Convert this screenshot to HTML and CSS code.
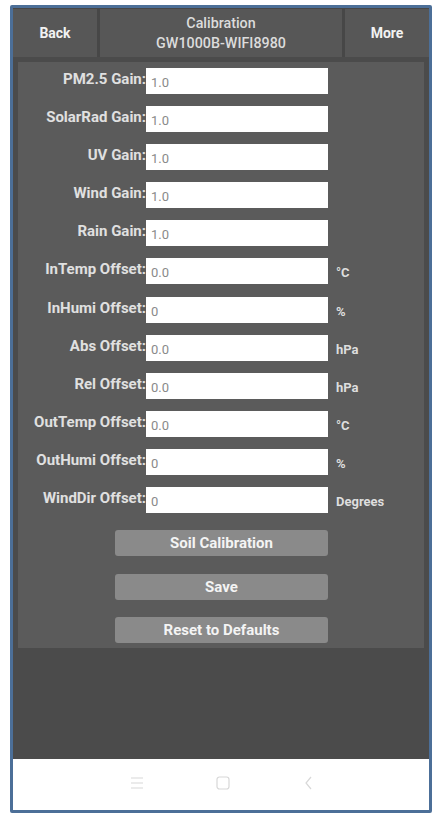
FILE: index.html
```html
<!DOCTYPE html>
<html>
<head>
<meta charset="utf-8">
<link rel="stylesheet" href="styles.css">
</head>
<body>
<div class="phone">
  <div class="screen">
    <header class="topbar">
      <div class="tb-btn">Back</div>
      <div class="tb-title"><div>Calibration</div><div>GW1000B-WIFI8980</div></div>
      <div class="tb-btn">More</div>
    </header>
    <main class="content">
      <section class="panel">
        <div class="row"><label class="lbl">PM2.5 Gain:</label><div class="inp">1.0</div><span class="unit"></span></div>
        <div class="row"><label class="lbl">SolarRad Gain:</label><div class="inp">1.0</div><span class="unit"></span></div>
        <div class="row"><label class="lbl">UV Gain:</label><div class="inp">1.0</div><span class="unit"></span></div>
        <div class="row"><label class="lbl">Wind Gain:</label><div class="inp">1.0</div><span class="unit"></span></div>
        <div class="row"><label class="lbl">Rain Gain:</label><div class="inp">1.0</div><span class="unit"></span></div>
        <div class="row"><label class="lbl">InTemp Offset:</label><div class="inp">0.0</div><span class="unit">°C</span></div>
        <div class="row"><label class="lbl">InHumi Offset:</label><div class="inp">0</div><span class="unit">%</span></div>
        <div class="row"><label class="lbl">Abs Offset:</label><div class="inp">0.0</div><span class="unit">hPa</span></div>
        <div class="row"><label class="lbl">Rel Offset:</label><div class="inp">0.0</div><span class="unit">hPa</span></div>
        <div class="row"><label class="lbl">OutTemp Offset:</label><div class="inp">0.0</div><span class="unit">°C</span></div>
        <div class="row"><label class="lbl">OutHumi Offset:</label><div class="inp">0</div><span class="unit">%</span></div>
        <div class="row"><label class="lbl">WindDir Offset:</label><div class="inp">0</div><span class="unit">Degrees</span></div>
        <div class="actions">
          <div class="act">Soil Calibration</div>
          <div class="act">Save</div>
          <div class="act">Reset to Defaults</div>
        </div>
      </section>
    </main>
    <nav class="navbar">
      <svg class="nav-ic" width="16" height="16" viewBox="0 0 16 16"><path d="M2 3h12M2 8h12M2 13h12" stroke="#d8d8d8" stroke-width="1.2" fill="none"/></svg>
      <svg class="nav-ic" width="16" height="16" viewBox="0 0 16 16"><rect x="2" y="2" width="12" height="12" rx="2.5" stroke="#d8d8d8" stroke-width="1.2" fill="none"/></svg>
      <svg class="nav-ic" width="16" height="16" viewBox="0 0 16 16"><path d="M10 2L5 8l5 6" stroke="#d8d8d8" stroke-width="1.2" fill="none"/></svg>
    </nav>
  </div>
</div>
</body>
</html>
```
FILE: styles.css
```css
html, body { margin: 0; padding: 0; background: #ffffff; }
body { font-family: Roboto, "Liberation Sans", sans-serif; }
.phone {
  margin: 5px 0 0 10px;
  width: 416px;
  height: 802px;
  border: 3px solid #4c6f98;
  border-radius: 2px;
}
.screen { display: flex; flex-direction: column; height: 100%; background: #4b4b4b; }
.topbar {
  display: flex;
  height: 48px;
  padding-top: 1px;
  gap: 3px;
  background: #474747;
}
.tb-btn {
  width: 84px;
  background: #575757;
  color: #f2f2f2;
  font-weight: 700;
  font-size: 14px;
  display: flex; align-items: center; justify-content: center;
}
.tb-title {
  flex: 1;
  background: #575757;
  color: #dcdcdc;
  font-weight: 500;
  font-size: 14.3px;
  line-height: 20px;
  display: flex; flex-direction: column; align-items: center; justify-content: center;
}
.content { flex: 1; padding: 5px 5px 0 5px; }
.panel {
  background: #5b5b5b;
  padding: 6px 0 5px 0;
  display: flex; flex-direction: column; gap: 12.1px;
}
.row { display: flex; height: 26px; align-items: flex-start; }
.lbl {
  width: 128px;
  text-align: right;
  color: #e0e0e0;
  font-weight: 700;
  font-size: 15px;
  line-height: 20px;
  padding-top: 1px;
  white-space: nowrap;
}
.inp {
  width: 177px;
  height: 26px;
  background: #ffffff;
  color: #8a8a8a;
  font-size: 13px;
  line-height: 29px;
  padding-left: 5px;
}
.unit {
  margin-left: 8px;
  color: #dedede;
  font-weight: 700;
  font-size: 13px;
  line-height: 30px;
}
.actions { display: flex; flex-direction: column; align-items: center; gap: 17.5px; padding-top: 5px; padding-left: 1px; }
.act {
  width: 213px;
  height: 26px;
  background: #8a8a8a;
  border-radius: 3px;
  color: #f4f4f4;
  font-weight: 700;
  font-size: 15px;
  line-height: 27px;
  text-align: center;
}
.navbar {
  height: 51px;
  background: #ffffff;
  display: flex; align-items: center; justify-content: center;
  gap: 70px;
  padding-left: 3px;
  padding-bottom: 4px;
  box-sizing: border-box;
}
```
